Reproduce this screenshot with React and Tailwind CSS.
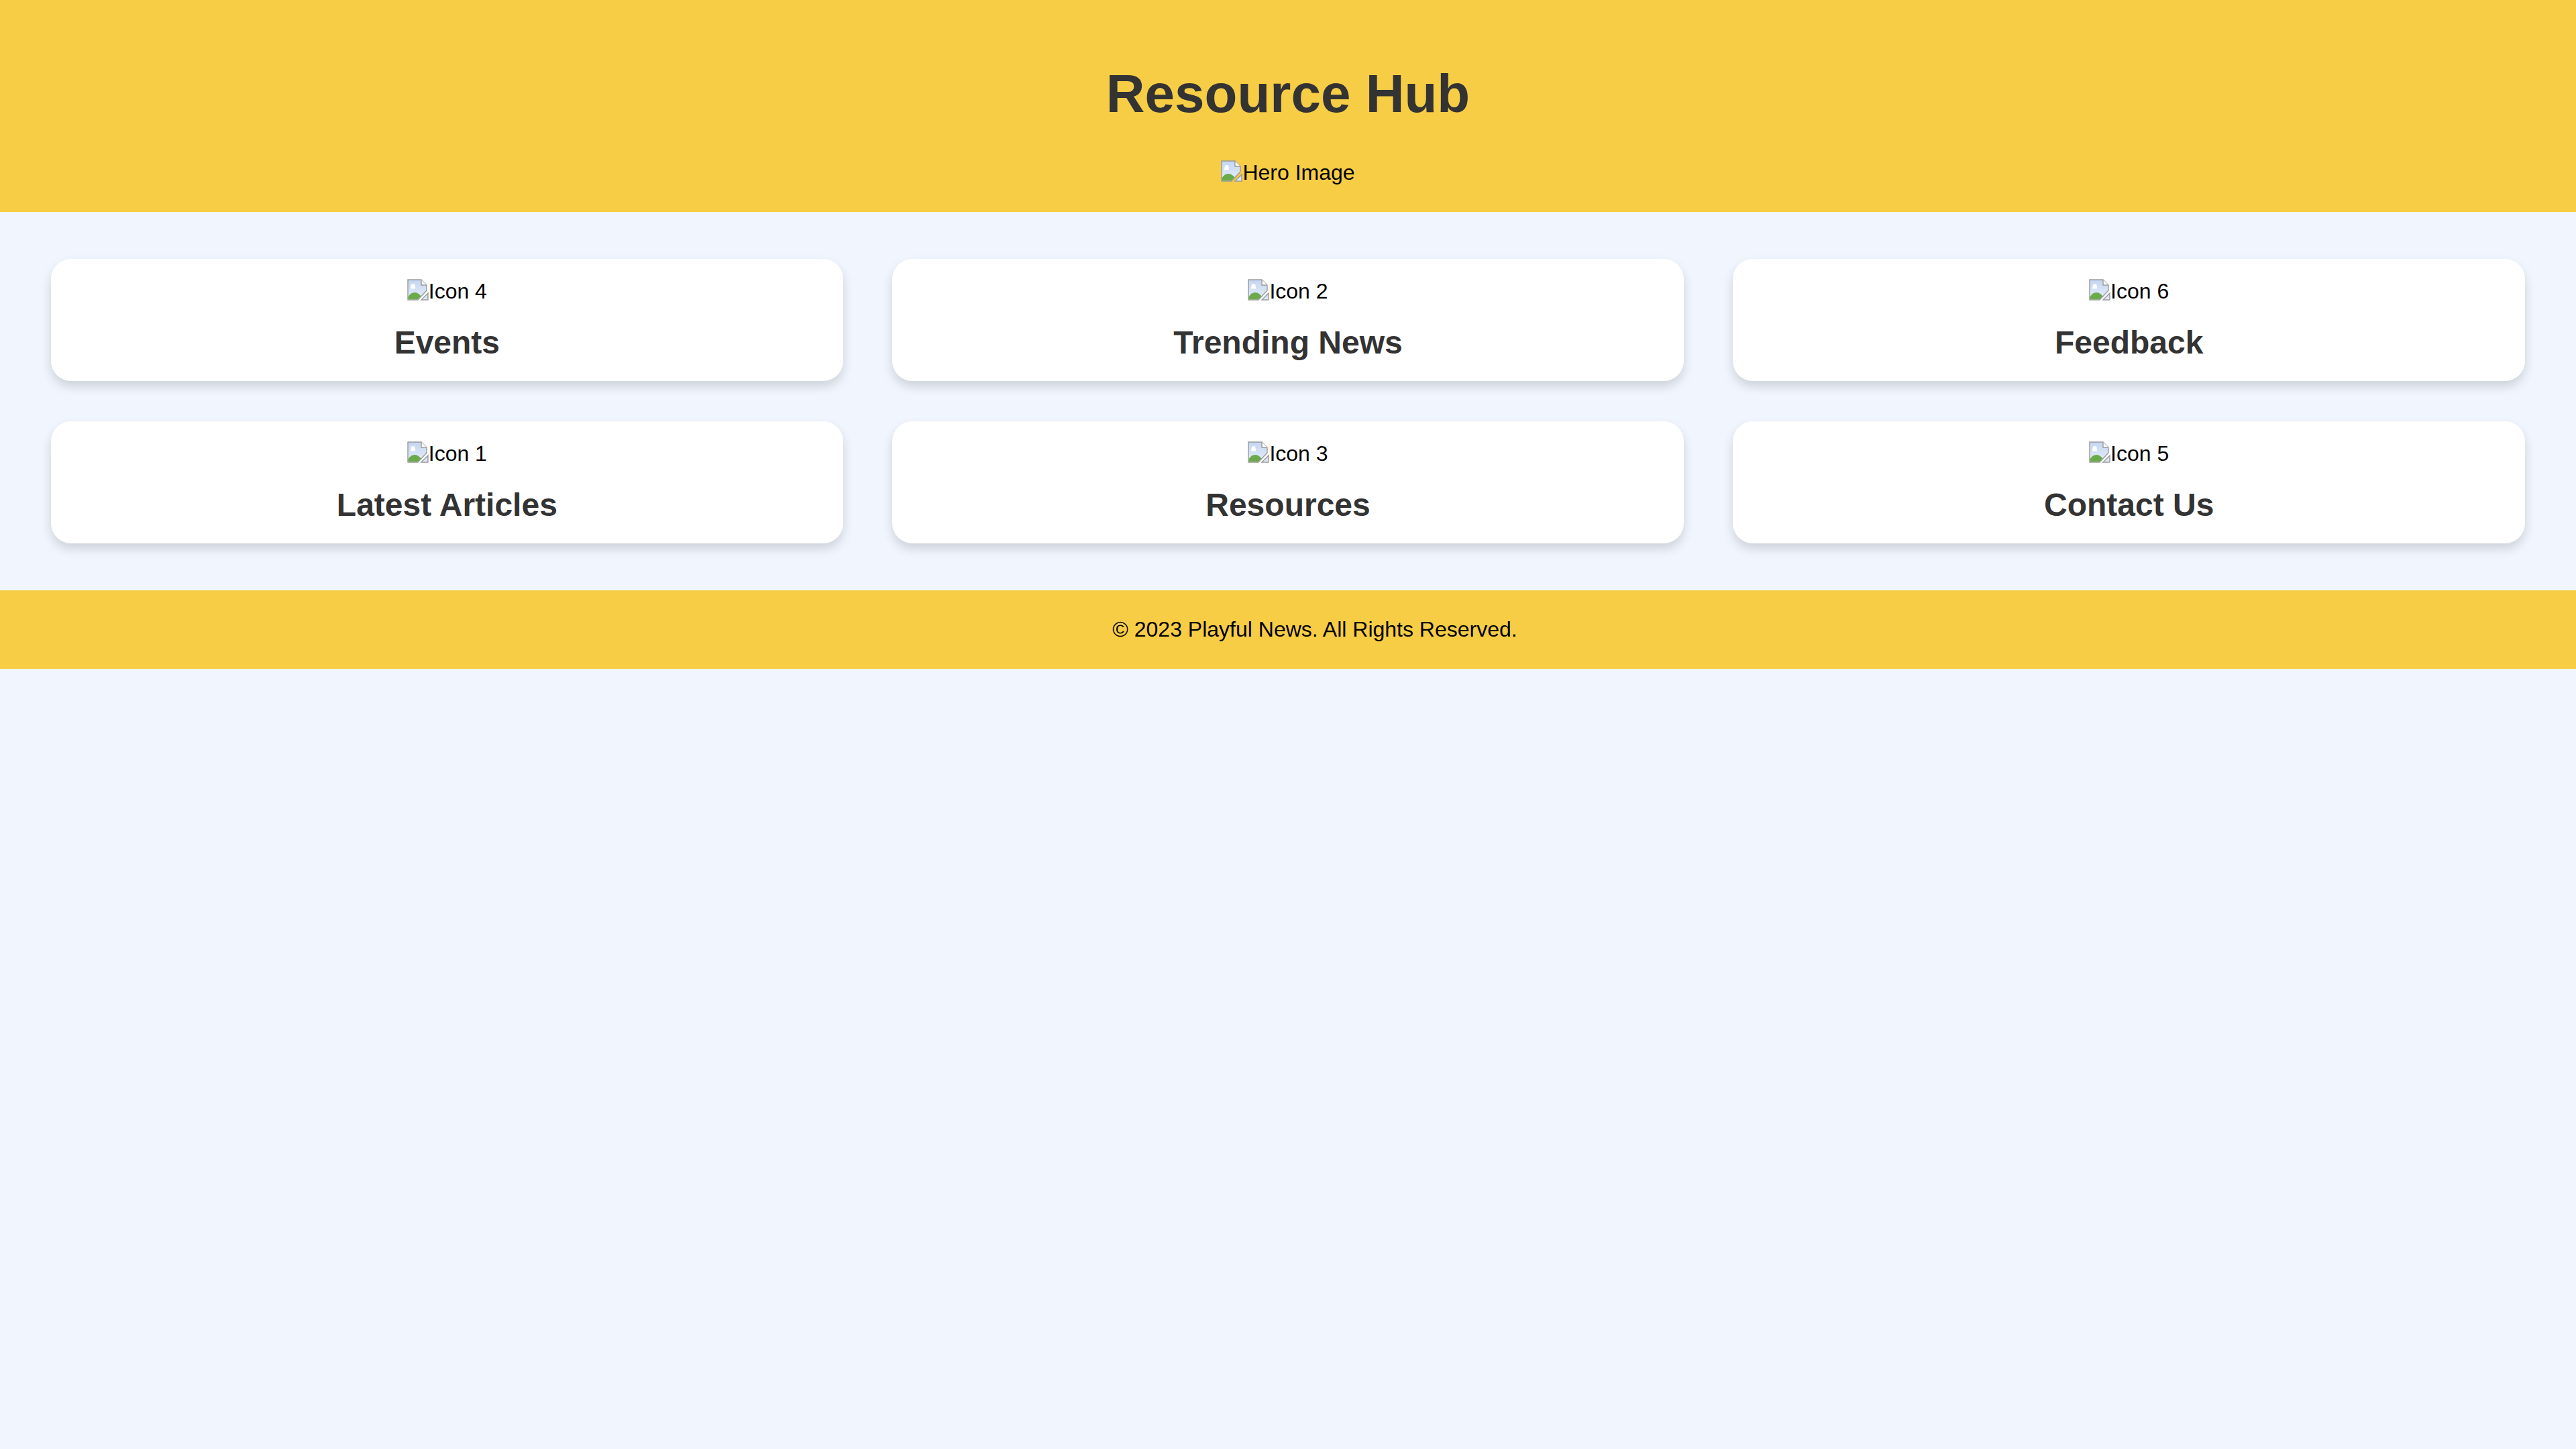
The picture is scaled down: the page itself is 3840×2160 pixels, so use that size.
import React from "react";

function BrokenImage() {
  return (
    <svg width="32" height="32" viewBox="0 0 16 16" className="shrink-0 block">
      <defs>
        <linearGradient id="bg" x1="0" y1="0" x2="0" y2="1">
          <stop offset="0" stopColor="#c4d6f2" />
          <stop offset="1" stopColor="#e6eefa" />
        </linearGradient>
      </defs>
      <path d="M0.5 0.5 L10.5 0.5 L14.5 4.5 L14.5 8.5 L8 15.5 L0.5 15.5 Z" fill="url(#bg)" stroke="#9a9a9a" strokeWidth="0.7" />
      <ellipse cx="4.3" cy="5.2" rx="1.5" ry="1.7" fill="#ffffff" />
      <rect x="2.6" y="5.6" width="3.4" height="1.6" fill="#ffffff" />
      <path d="M0.85 15.15 L0.85 13 Q3 9.6 6 10 Q8.4 10.4 10.2 12.6 L7.85 15.15 Z" fill="#6aaa4a" />
      <path d="M10.5 0.5 L10.5 4.5 L14.5 4.5" fill="#ffffff" stroke="#9a9a9a" strokeWidth="0.7" />
      <path d="M15.5 10.5 L15.5 15.5 L10.5 15.5 Z" fill="url(#bg)" stroke="#9a9a9a" strokeWidth="0.7" />
    </svg>
  );
}

function ImgAlt({ label }) {
  return (
    <div className="flex items-start h-[37px]">
      <BrokenImage />
      <span className="text-[32px] leading-[37px] text-black">{label}</span>
    </div>
  );
}

const cards = [
  { icon: "Icon 4", title: "Events" },
  { icon: "Icon 2", title: "Trending News" },
  { icon: "Icon 6", title: "Feedback" },
  { icon: "Icon 1", title: "Latest Articles" },
  { icon: "Icon 3", title: "Resources" },
  { icon: "Icon 5", title: "Contact Us" },
];

export default function App() {
  return (
    <div
      className="min-h-screen bg-[#f1f6fe]"
      style={{ fontFamily: '"Liberation Sans", Arial, sans-serif' }}
    >
      <header className="bg-[#f7cd46] pt-[40px] pb-[40px] flex flex-col items-center">
        <h1 className="mt-[54px] mb-[53px] text-[80px] leading-[92px] font-bold text-[#333333]">
          Resource Hub
        </h1>
        <ImgAlt label="Hero Image" />
      </header>

      <main className="px-[76px] py-[70px] grid grid-cols-3 gap-x-[73px] gap-y-[60px]">
        {cards.map((c) => (
          <div
            key={c.title}
            className="bg-white rounded-[30px] shadow-[0_8px_16px_rgba(0,0,0,0.15)] pt-[30px] pb-[30px] flex flex-col items-center"
          >
            <ImgAlt label={c.icon} />
            <h2 className="mt-[30px] text-[48px] leading-[55px] font-bold text-[#333333]">
              {c.title}
            </h2>
          </div>
        ))}
      </main>

      <footer className="bg-[#f7cd46] py-[40px] pl-[80px] text-center">
        <p className="text-[32px] leading-[37px] text-black">
          © 2023 Playful News. All Rights Reserved.
        </p>
      </footer>
    </div>
  );
}
